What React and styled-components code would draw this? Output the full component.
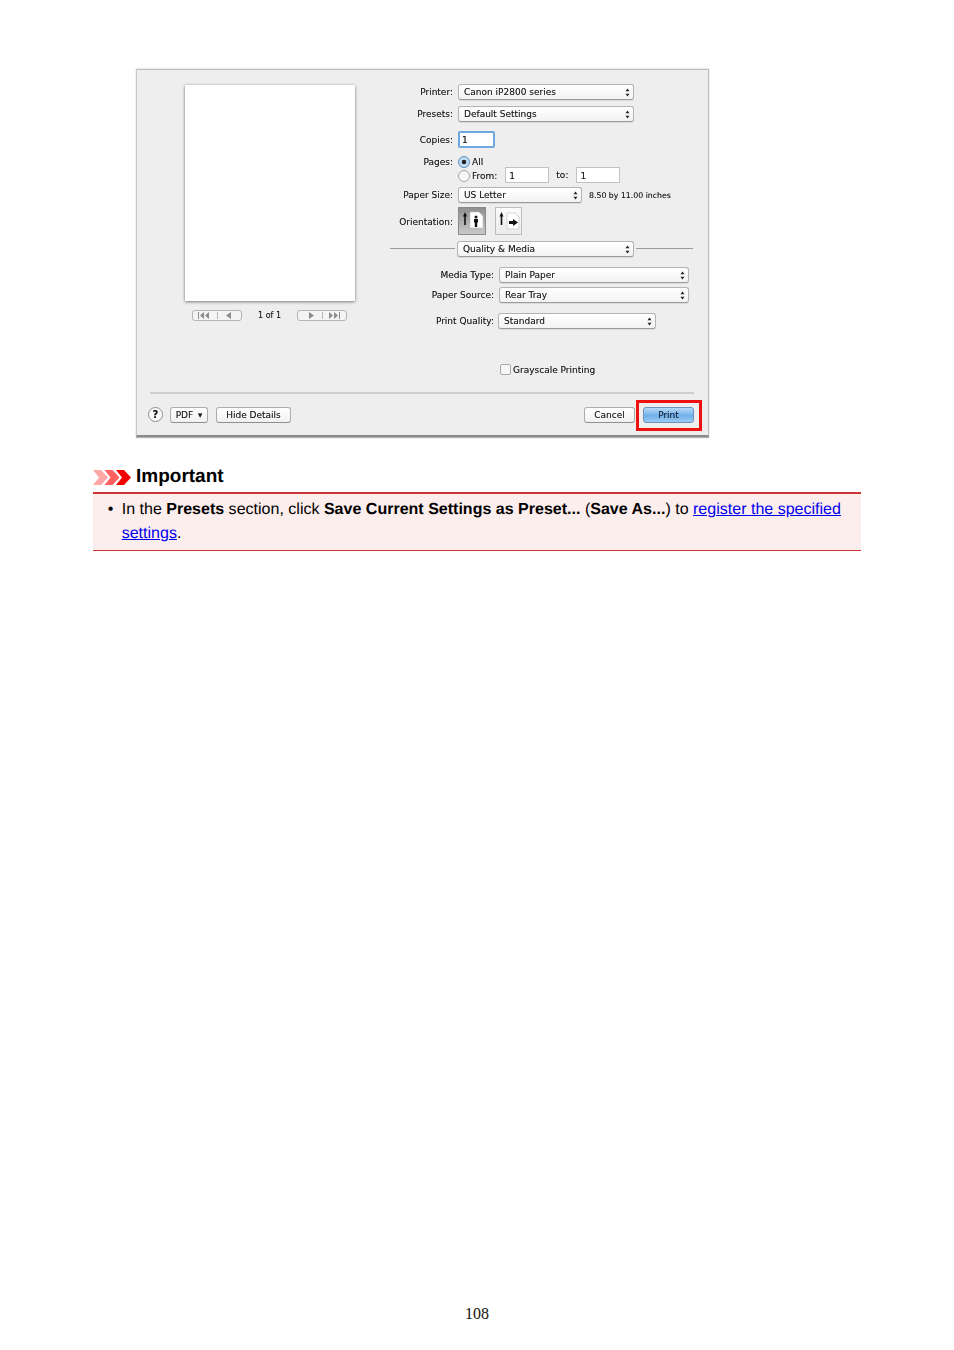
import React from "react";
import styled, { createGlobalStyle } from "styled-components";

const Global = createGlobalStyle`
  html, body { margin: 0; padding: 0; background: #fff; }
`;

const Page = styled.div`
  width: 954px; height: 1350px; box-sizing: border-box; padding-top: 69px;
  display: flex; flex-direction: column; background: #fff; overflow: hidden;
`;

const Dialog = styled.section`
  margin-left: 136px; width: 573px; height: 368px; box-sizing: border-box;
  background: #eeeeee; border-top: 1px solid #bdbdbd; border-left: 1px solid #c8c8c8; border-right: 1px solid #bdbdbd;
  border-bottom: 2px solid #8a8a8a;
  box-shadow: 0 1px 1px rgba(0,0,0,.3), 0 -1px 1px rgba(0,0,0,.08);
  font-family: "DejaVu Sans", sans-serif; font-size: 9px; color: #1c1c1c;
  text-shadow: 0 0 .6px rgba(0,0,0,.45);
  filter: blur(0.35px); display: flex; flex-direction: column;
`;

const Main = styled.div`display: flex; height: 322px; padding-top: 14px; box-sizing: border-box;`;
const PreviewCol = styled.div`margin-left: 48px; width: 205px; flex: none;`;
const Sheet = styled.div`
  margin-top: 1px; width: 170px; height: 216px; background: #fff;
  box-shadow: 0 1px 3px rgba(0,0,0,.45), 0 0 2px rgba(0,0,0,.12);
`;
const Pager = styled.div`
  margin: 9px 0 0 7px; width: 155px; display: flex; justify-content: space-between; align-items: center;
`;
const PagerBtn = styled.div`
  width: 50px; height: 11px; box-sizing: border-box; border: 1px solid #b5b5b5; border-radius: 3px; background: #f4f4f4;
  display: flex; align-items: center; justify-content: center;
`;
const PageCount = styled.span`font-size: 8px;`;

const FormCol = styled.div`width: 303px; flex: none;`;
const Row = styled.div`
  display: flex; align-items: center; height: ${p => p.$h}px; margin-top: ${p => p.$mt || 0}px;
`;
const Label = styled.label`
  flex: none; width: ${p => p.$w}px; margin-right: ${p => p.$gap ?? 5}px; margin-top: ${p => p.$drop || 0}px;
  text-align: right; white-space: nowrap; font-size: 9px; line-height: 11px;
`;
const Select = styled.div`
  flex: none; box-sizing: border-box; width: ${p => p.$w}px; height: ${p => p.$h || 16}px;
  border: 1px solid #b4b4b4; border-bottom-color: #9c9c9c; border-radius: 3px;
  background: linear-gradient(#ffffff, #f3f3f3);
  display: flex; align-items: center; justify-content: space-between; padding: 0 3px 0 5px;
  white-space: nowrap; box-shadow: 0 1px 0 rgba(0,0,0,.08);
  font-size: 9px;
`;
const Field = styled.div`
  flex: none; box-sizing: border-box; width: ${p => p.$w}px; height: ${p => p.$h || 16}px;
  margin-left: ${p => p.$ml || 0}px; background: #fff; padding-left: 3px;
  border: 1px solid #c2c2c2; line-height: 16px;
`;
const FocusField = styled(Field)`
  border: 2px solid #6fa8dc; border-radius: 2px; line-height: 15px; padding-left: 2px;
`;
const Radio = styled.span`
  flex: none; width: 12px; height: 12px; box-sizing: border-box; border-radius: 50%;
  border: 1px solid ${p => p.$on ? "#5f93c4" : "#a8a8a8"};
  background: ${p => p.$on ? "radial-gradient(circle, #222 0 2px, #bcd9f2 2.5px)" : "linear-gradient(#f2f2f2,#fff)"};
  margin-right: 2px; margin-top: ${p => p.$drop || 0}px;
`;
const RadioText = styled.span`margin-top: ${p => p.$drop || 0}px;`;
const ToLabel = styled.span`margin-left: 7px;`;
const SizeNote = styled.span`margin-left: 7px; font-size: 7.8px; white-space: nowrap;`;
const OrientBtn = styled.div`
  flex: none; width: ${p => p.$on ? 28 : 27}px; height: 28px; box-sizing: border-box; margin-left: ${p => p.$ml || 0}px;
  border: 1px solid ${p => p.$on ? "#8a8a8a" : "#bdbdbd"};
  background: ${p => p.$on ? "linear-gradient(#8f8f8f,#c9c9c9)" : "linear-gradient(#fbfbfb,#ececec)"};
  display: flex; align-items: center; justify-content: center;
`;
const Rule = styled.div`flex: ${p => p.$w ? "none" : 1}; width: ${p => p.$w ? `${p.$w}px` : "auto"}; height: 1px; margin-bottom: 2px; background: #9a9a9a;`;
const SectionRow = styled(Row)`gap: 2px;`;
const CheckBox = styled.span`
  width: 11px; height: 11px; box-sizing: border-box; border: 1px solid #aaa; border-radius: 2px; background: #f7f7f7; margin-right: 2px; flex: none;
`;
const CheckRow = styled(Row)`padding-left: 110px;`;
const CheckText = styled.span`margin-top: 1px; font-size: 9px;`;

const Divider = styled.div`margin: 0 14px 0 13px; height: 2px; background: #cfcfcf;`;
const Bar = styled.div`
  display: flex; align-items: center; margin-top: 12px; padding: 0 14px 0 11px; height: 17px;
`;
const Help = styled.span`
  width: 15px; height: 15px; box-sizing: border-box; border: 1px solid #8f8f8f; border-radius: 50%;
  background: #fafafa; text-align: center; font-size: 10px; line-height: 13px; font-weight: 700; margin-right: 7px;
`;
const Btn = styled.button`
  box-sizing: border-box; width: ${p => p.$w}px; height: 16px; padding: 0; margin: 0 0 0 ${p => p.$ml || 0}px;
  border: 1px solid #adadad; border-bottom-color: #8f8f8f; border-radius: 3px;
  background: linear-gradient(#ffffff,#f1f1f1); font: inherit; color: inherit; text-shadow: inherit; white-space: nowrap;
`;
const PdfCaret = styled.span`font-size: 5.5px; margin-left: 2px; vertical-align: 1px;`;
const Spacer = styled.div`flex: 1;`;
const PrintWrap = styled.div`position: relative; margin-left: 8px;`;
const PrintBtn = styled(Btn)`
  display: block; border-color: #6b93bd; color: #14233a;
  background: linear-gradient(#b9daf6, #6fb0ea 55%, #9ccbf2);
`;
const Highlight = styled.div`
  position: absolute; left: -7px; right: -8px; top: -7px; bottom: -8px; border: 3px solid #ee1111;
`;

const Notice = styled.div`
  margin: 28px 0 0 93px; width: 768px; font-family: "Liberation Sans", Arial, sans-serif; color: #000;
  text-rendering: geometricPrecision;
`;
const NoticeHead = styled.div`display: flex; align-items: center; height: 24px; gap: 5px;`;
const NoticeTitle = styled.h2`margin: 0; font-size: 19px; font-weight: 700; line-height: 24px;`;
const NoticeBody = styled.div`
  box-sizing: border-box; margin-top: 3px; height: 59px; background: #fdeeee;
  border-top: 2px solid #cc3333; border-bottom: 1px solid #cc3333; padding: 4px 0 0 28.7px;
`;
const NoticeList = styled.ul`margin: 0; padding: 0; list-style: none;`;
const NoticeItem = styled.li`
  font-size: 16px; line-height: 24.4px; width: 730px; letter-spacing: .012px;
  &::before { content: "•"; float: left; margin-left: -14px; }
`;
const DocLink = styled.a`color: #0000ee; text-decoration: underline;`;
const Folio = styled.div`
  margin-top: auto; margin-bottom: 27px; text-align: center; font-family: "Liberation Serif", serif; font-size: 16px; line-height: 18px; color: #111;
`;

const Stepper = () => (
  <svg width="5" height="9" viewBox="0 0 5 9"><path d="M2.5 0.5 4.5 3.2H.5zM2.5 8.5 4.5 5.8H.5z" fill="#222" /></svg>
);
const Chevrons = () => (
  <svg width="38" height="15" viewBox="0 0 38 15">
    <path d="M0 0h8l7 7.5L8 15H0l6-7.5z" fill="#ffa6a6" />
    <path d="M11.500 0h8l7 7.500-7 7.500h-8l6-7.500z" fill="#ff6060" />
    <path d="M23 0h8l7 7.500-7 7.500h-8l6-7.500z" fill="#f00000" />
  </svg>
);
const PagerBack = () => (
  <svg width="40" height="7" viewBox="0 0 40 7" fill="#8c8c8c">
    <path d="M1 0h1v7H1zM7 0v7L3 3.500zM12 0v7L8 3.500zM20 0h.6v7H20zM34 0v7l-5-3.500z" />
  </svg>
);
const PagerFwd = () => (
  <svg width="40" height="7" viewBox="0 0 40 7" fill="#8c8c8c">
    <path d="M7 0v7l5-3.500zM20 0h.6v7H20zM27 0v7l4-3.500zM32 0v7l4-3.500zM37 0h1v7h-1z" />
  </svg>
);
const Portrait = () => (
  <svg width="22" height="20" viewBox="0 0 22 20">
    <path d="M4 1 6 5.500H4.800V14H3.200V5.500H2z" fill="#111" />
    <path d="M9 1h9l4 4v12H9z" fill="#fff" stroke="#bdbdbd" strokeWidth=".6" />
    <circle cx="15" cy="6" r="1.500" fill="#111" />
    <path d="M13 8h4v3.500h-.8V16h-2.400v-4.500H13z" fill="#111" />
  </svg>
);
const Landscape = () => (
  <svg width="22" height="20" viewBox="0 0 22 20">
    <path d="M3.500 1 5.500 5.500H4.300V14H2.700V5.500H1.500z" fill="#111" />
    <path d="M9 2h8l4 4v12H9z" fill="#fff" stroke="#bdbdbd" strokeWidth=".6" />
    <path d="M11 10v3h4v2l5-3.500-5-3.500v2z" fill="#111" />
  </svg>
);

const Pick = ({ w, h, children }) => (
  <Select $w={w} $h={h}><span>{children}</span><Stepper /></Select>
);

export default function App() {
  return (
    <Page>
      <Global />
      <Dialog>
        <Main>
          <PreviewCol>
            <Sheet />
            <Pager>
              <PagerBtn><PagerBack /></PagerBtn>
              <PageCount>1 of 1</PageCount>
              <PagerBtn><PagerFwd /></PagerBtn>
            </Pager>
          </PreviewCol>
          <FormCol>
            <Row $h={16}><Label $w={63}>Printer:</Label><Pick w={176}>Canon iP2800 series</Pick></Row>
            <Row $h={16} $mt={6}><Label $w={63}>Presets:</Label><Pick w={176}>Default Settings</Pick></Row>
            <Row $h={17} $mt={9}><Label $w={63} $drop={2}>Copies:</Label><FocusField $w={37} $h={17}>1</FocusField></Row>
            <Row $h={12} $mt={8}><Label $w={63}>Pages:</Label><Radio $on /><span>All</span></Row>
            <Row $h={16} $mt={-1}>
              <Label $w={63} as="span" />
              <Radio $drop={2} /><RadioText $drop={2}>From:</RadioText>
              <Field $w={44} $ml={8}>1</Field>
              <ToLabel>to:</ToLabel>
              <Field $w={44} $ml={8}>1</Field>
            </Row>
            <Row $h={16} $mt={4}><Label $w={63}>Paper Size:</Label><Pick w={124}>US Letter</Pick><SizeNote>8.50 by 11.00 inches</SizeNote></Row>
            <Row $h={28} $mt={4}>
              <Label $w={63} $drop={2}>Orientation:</Label>
              <OrientBtn $on><Portrait /></OrientBtn>
              <OrientBtn $ml={9}><Landscape /></OrientBtn>
            </Row>
            <SectionRow $h={16} $mt={6}><Rule /><Pick w={177}>Quality &amp; Media</Pick><Rule $w={57} /></SectionRow>
            <Row $h={16} $mt={10}><Label $w={104}>Media Type:</Label><Pick w={190}>Plain Paper</Pick></Row>
            <Row $h={16} $mt={4}><Label $w={104}>Paper Source:</Label><Pick w={190}>Rear Tray</Pick></Row>
            <Row $h={16} $mt={10}><Label $w={104} $gap={4}>Print Quality:</Label><Pick w={158}>Standard</Pick></Row>
            <CheckRow $h={12} $mt={34}><CheckBox /><CheckText>Grayscale Printing</CheckText></CheckRow>
          </FormCol>
        </Main>
        <Divider />
        <Bar>
          <Help>?</Help>
          <Btn $w={38}>PDF <PdfCaret>▼</PdfCaret></Btn>
          <Btn $w={75} $ml={8}>Hide Details</Btn>
          <Spacer />
          <Btn $w={51}>Cancel</Btn>
          <PrintWrap>
            <PrintBtn $w={51}>Print</PrintBtn>
            <Highlight />
          </PrintWrap>
        </Bar>
      </Dialog>

      <Notice>
        <NoticeHead><Chevrons /><NoticeTitle>Important</NoticeTitle></NoticeHead>
        <NoticeBody>
          <NoticeList>
            <NoticeItem>
              In the <b>Presets</b> section, click <b>Save Current Settings as Preset...</b> (<b>Save As...</b>) to <DocLink href="#">register the specified settings</DocLink>.
            </NoticeItem>
          </NoticeList>
        </NoticeBody>
      </Notice>
      <Folio>108</Folio>
    </Page>
  );
}
